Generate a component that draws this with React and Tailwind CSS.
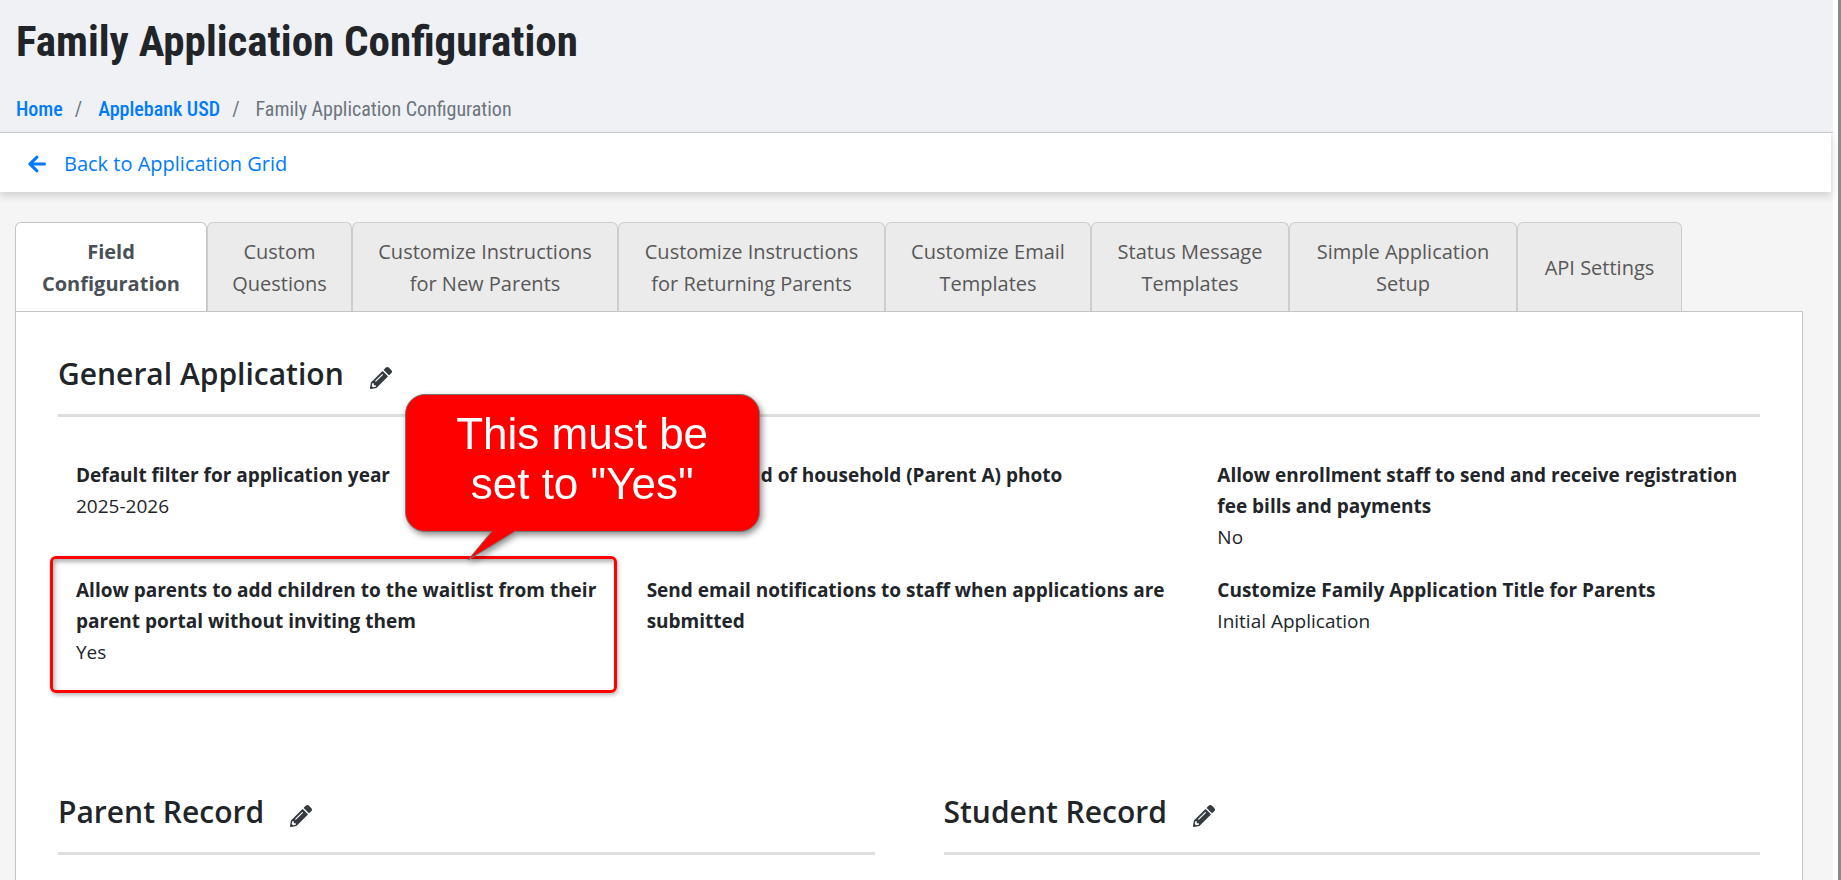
import { FaArrowLeft, FaPencilAlt } from "react-icons/fa";

const tabs = [
  { lines: ["Field", "Configuration"], width: "w-48", active: true },
  { lines: ["Custom", "Questions"], width: "w-[145px]" },
  { lines: ["Customize Instructions", "for New Parents"], width: "w-[266px]" },
  { lines: ["Customize Instructions", "for Returning Parents"], width: "w-[267px]" },
  { lines: ["Customize Email", "Templates"], width: "w-[206px]" },
  { lines: ["Status Message", "Templates"], width: "w-[198px]" },
  { lines: ["Simple Application", "Setup"], width: "w-[228px]" },
  { lines: ["API Settings"], width: "w-[165px]" },
];

const fields = [
  { label: "Default filter for application year", value: "2025-2026" },
  { label: "Require head of household (Parent A) photo", value: "", callout: true },
  {
    label: "Allow enrollment staff to send and receive registration fee bills and payments",
    value: "No",
  },
  {
    label: "Allow parents to add children to the waitlist from their parent portal without inviting them",
    value: "Yes",
    highlight: true,
  },
  { label: "Send email notifications to staff when applications are submitted", value: "" },
  { label: "Customize Family Application Title for Parents", value: "Initial Application" },
];

function Tab({ lines, width, active }) {
  const look = active
    ? "border-[#c4c4c4] border-b-white bg-white font-bold text-[#495057]"
    : "border-[#cdcdcd] border-b-[#c4c4c4] bg-[#ebebeb] text-[#585858]";
  return (
    <button
      type="button"
      role="tab"
      aria-selected={!!active}
      className={`flex h-[90px] shrink-0 flex-col items-center justify-center rounded-t-md border pt-[2px] text-[20px] leading-8 whitespace-nowrap ${width} ${look}`}
    >
      {lines.map((line) => (
        <span key={line}>{line}</span>
      ))}
    </button>
  );
}

function SectionTitle({ children }) {
  return (
    <div className="flex items-center gap-[26px] border-b-[3px] border-[#dedede] pb-5">
      <h2 className="text-[30px] leading-10 font-semibold">{children}</h2>
      <button type="button" aria-label={`Edit ${children}`} className="mt-2 text-[#343a40]">
        <FaPencilAlt className="size-[22px]" />
      </button>
    </div>
  );
}

function Callout() {
  return (
    <div className="absolute -top-[66px] -left-[242px] z-10 drop-shadow-[2px_3px_3px_rgba(0,0,0,0.45)]">
      <div className="flex h-[138px] w-[355px] flex-col items-center rounded-[20px] border border-[#777] bg-[#ff0000] pt-[14px] font-['Liberation_Sans',Arial,sans-serif] text-[44px] leading-[50px] text-white">
        <span>This must be</span>
        <span>set to "Yes"</span>
      </div>
      <svg
        className="absolute top-[136px] left-[62px]"
        width="50"
        height="32"
        viewBox="0 0 50 32"
        aria-hidden="true"
      >
        <path d="M26 0 L1 30 L50 0 Z" fill="#ff0000" />
        <path d="M25 1 L1 30 L49 1" fill="none" stroke="#777" />
      </svg>
    </div>
  );
}

function Field({ label, value, highlight, callout }) {
  return (
    <div className="relative min-h-[93px]">
      {highlight && (
        <div className="absolute -top-[19px] right-[2px] -left-[26px] h-[137px] rounded-md border-[3px] border-[#ff0000] shadow-[1px_2px_4px_rgba(0,0,0,0.3),inset_2px_3px_4px_rgba(0,0,0,0.3)]" />
      )}
      <dt className="font-bold">{label}</dt>
      <dd>{value}</dd>
      {callout && <Callout />}
    </div>
  );
}

export default function App() {
  return (
    <div className="flex h-screen overflow-hidden border-r-[3px] border-[#8a8a8a] bg-[#fdfdfd] pr-[5px] font-['Open_Sans','Noto_Sans',sans-serif] text-[#212529]">
      <div className="flex min-w-0 flex-1 flex-col bg-[#f5f5f5]">
        <header className="border-b border-[#c8c9cc] bg-[#eff1f5] px-4 pt-3 pb-[9px] font-['Roboto_Condensed',Roboto,sans-serif]">
          <h1 className="text-[43px] leading-[58px] font-bold">Family Application Configuration</h1>
          <nav aria-label="Breadcrumb" className="mt-[25px]">
            <ol className="flex text-[20px] leading-7 text-[#6c757d]">
              <li>
                <a href="#home" className="font-medium text-[#007bff]">Home</a>
                <span className="pr-4 pl-3">/</span>
              </li>
              <li>
                <a href="#applebank" className="font-medium text-[#007bff]">Applebank USD</a>
                <span className="pr-4 pl-3">/</span>
              </li>
              <li aria-current="page">Family Application Configuration</li>
            </ol>
          </nav>
        </header>
        <div className="mr-[2px] bg-white px-[27px] pt-[15px] pb-3 shadow-[0_4px_8px_rgba(0,0,0,0.15)]">
          <a href="#grid" className="flex w-fit items-center gap-[17px] text-[20px] leading-8 text-[#007bff]">
            <FaArrowLeft className="size-5" />
            Back to Application Grid
          </a>
        </div>
        <main className="flex flex-1 flex-col pt-[30px] pr-[30px] pl-[15px]">
          <div role="tablist" className="-mb-px flex">
            {tabs.map((tab) => (
              <Tab key={tab.lines.join(" ")} {...tab} />
            ))}
          </div>
          <section className="flex-1 border border-b-0 border-[#c4c4c4] bg-white px-[42px] pt-[42px]">
            <SectionTitle>General Application</SectionTitle>
            <dl className="mt-[43px] grid grid-cols-3 gap-x-7 gap-y-[22px] pl-[18px] text-[19px] leading-[31px]">
              {fields.map((field) => (
                <Field key={field.label} {...field} />
              ))}
            </dl>
            <div className="mt-[124px] grid grid-cols-2 gap-x-[69px]">
              <SectionTitle>Parent Record</SectionTitle>
              <SectionTitle>Student Record</SectionTitle>
            </div>
          </section>
        </main>
      </div>
    </div>
  );
}
